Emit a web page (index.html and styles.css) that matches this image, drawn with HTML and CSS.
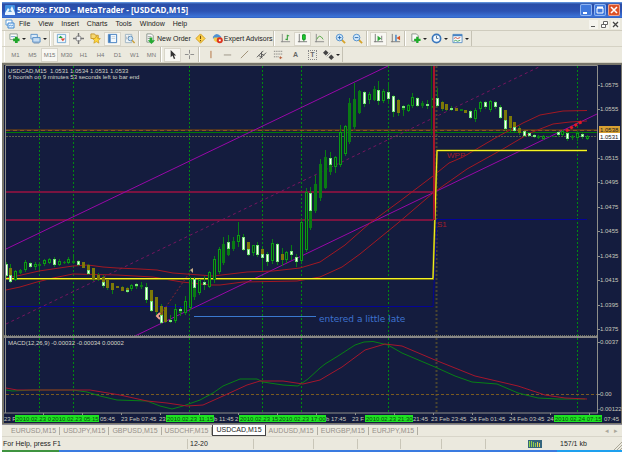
FILE: index.html
```html
<!DOCTYPE html>
<html lang="en">
<head>
<meta charset="utf-8">
<title>560799: FXDD - MetaTrader - [USDCAD,M15]</title>
<link rel="stylesheet" href="styles.css">
</head>
<body>
<div class="window">
  <header class="titlebar">
    <svg class="app-icon" viewBox="0 0 10 10"><rect width="10" height="10" rx="1" fill="#3f8fe0"/><path d="M0 8L3 3l2 2 2-4 3 7v2H0z" fill="#e8f4ff"/><path d="M3 7l2-3 2 3z" fill="#5ea0d8"/></svg>
    <h1>560799: FXDD - MetaTrader - [USDCAD,M15]</h1>
    <div class="window-buttons">
      <button aria-label="Minimize"><svg viewBox="0 0 12 12"><path d="M3 9h4" stroke="#fff" stroke-width="2"/></svg></button>
      <button aria-label="Maximize"><svg viewBox="0 0 12 12"><path d="M3 4h6v5H3z" fill="none" stroke="#fff"/><path d="M3 3.500h6" stroke="#fff" stroke-width="2"/></svg></button>
      <button class="close" aria-label="Close"><svg viewBox="0 0 12 12"><path d="M3 3l6 6M9 3L3 9" stroke="#fff" stroke-width="1.600"/></svg></button>
    </div>
  </header>

  <nav class="menubar">
    <svg class="doc-icon" viewBox="0 0 10 10"><path d="M1 1h6v5H1z" fill="#fff" stroke="#5a9ad8"/><path d="M3 4h6v5H3z" fill="#e4f2ff" stroke="#3f86d0"/><path d="M4 7l1.500-1 1 1L8 6" stroke="#5a9ad8" fill="none"/></svg>
    <button>File</button><button>View</button><button>Insert</button><button>Charts</button><button>Tools</button><button>Window</button><button>Help</button>
    <div class="child-buttons">
      <button aria-label="Minimize chart"><svg viewBox="0 0 9 9"><path d="M2 6.500h4" stroke="#555"/></svg></button>
      <button aria-label="Restore chart"><svg viewBox="0 0 9 9"><path d="M3.500 1.500h4v3h-4zM1.500 4.500h4v3h-4z" fill="#fff" stroke="#666"/></svg></button>
      <button aria-label="Close chart"><svg viewBox="0 0 9 9"><path d="M2 2l5 5M7 2L2 7" stroke="#444" stroke-width="1.300"/></svg></button>
    </div>
  </nav>

  <div class="toolbar">
    <div class="group">
      <button class="drop" aria-label="New chart"><svg viewBox="0 0 12 12"><path d="M1 1h8v6H1z" fill="#fff" stroke="#8a9a90"/><path d="M2 4h5" stroke="#6a9cc8"/><path d="M8 4v7M4.500 7.500h7" stroke="#1fa52a" stroke-width="3"/></svg></button>
      <button class="drop" aria-label="Profiles"><svg viewBox="0 0 12 12"><path d="M1 1.500h7v5H1z" fill="#dcebf8" stroke="#5b93c9"/><path d="M3 5h8v5H3z" fill="#c6ddf3" stroke="#4f89c4"/><path d="M4 11h6" stroke="#7895b5"/></svg></button>
    </div>
    <div class="group">
      <button class="on" aria-label="Market watch"><svg viewBox="0 0 12 12"><path d="M1.500 1.500h9v9h-9z" fill="#edf6fc" stroke="#73a9d2"/><path d="M2.500 5.500L5 3l2.500 2.500z" fill="#24a336"/><path d="M5 6h5L7.500 9z" fill="#e2482e"/></svg></button>
      <button aria-label="Data window"><svg viewBox="0 0 12 12"><circle cx="6" cy="6" r="3" fill="#eee" stroke="#888"/><path d="M6 0v4M6 8v4M0 6h4M8 6h4" stroke="#777" stroke-width="1.500"/></svg></button>
      <button aria-label="Navigator"><svg viewBox="0 0 12 12"><path d="M1 1h4l1 1.500h3V6H1z" fill="#f6d873" stroke="#c5962c"/><path d="M7 3l1.300 2.800 3 .3-2.300 2 .8 3L7 9.500l-2.800 1.600.7-3-2.300-2 3-.3z" fill="#ffd73c" stroke="#c99516" stroke-width=".7"/></svg></button>
      <button class="on" aria-label="Terminal"><svg viewBox="0 0 12 12"><path d="M1.500 1.500h9v9h-9z" fill="#f3f9ff" stroke="#3c79bd"/><path d="M3 2v8" stroke="#3c79bd" stroke-width="2"/><path d="M5 4h4M5 6h4" stroke="#c5ced6"/></svg></button>
      <button aria-label="Strategy tester"><svg viewBox="0 0 12 12"><path d="M1.500 1.500h7v9h-7z" fill="#eef4f8" stroke="#9eb3c1"/><path d="M3 7V4M5 8V3" stroke="#aaa"/><circle cx="7" cy="6" r="2.500" fill="#cfe5f6" stroke="#6090bc"/><path d="M9 8l2.500 3" stroke="#c79b32" stroke-width="1.500"/></svg></button>
    </div>
    <div class="group">
      <button class="text"><svg viewBox="0 0 12 12"><path d="M2 1h5l2 2v7H2z" fill="#fafafa" stroke="#89948a"/><path d="M3 4h4M3 6h3" stroke="#999"/><path d="M5 5h3v3h3L7 12 3 8h2z" fill="#24aa32"/></svg>New Order</button>
      <button aria-label="MetaEditor"><svg viewBox="0 0 12 12"><path d="M6 1l5 5-5 5-5-5z" fill="#ffd34d" stroke="#cf9b1c"/><path d="M6 3v3.500M6 7.500v1.500" stroke="#76530b" stroke-width="1.200"/></svg></button>
      <button class="text"><svg viewBox="0 0 12 12"><path d="M1 4Q5-2 10 4v2H1z" fill="#4e91d3"/><path d="M2 5h7v3Q5 12 2 8z" fill="#f3cb4c"/><circle cx="8.500" cy="8" r="3.300" fill="#dd3420"/><path d="M7.500 7h2v2h-2z" fill="#fff"/></svg>Expert Advisors</button>
    </div>
    <div class="group">
      <button aria-label="Bar chart"><svg viewBox="0 0 12 12"><path d="M2.500 1v9M1 9.500h10" stroke="#888"/><path d="M8 2v6M6 7h2M8 3h2" stroke="#38a13c" stroke-width="1.200"/></svg></button>
      <button class="on" aria-label="Candlesticks"><svg viewBox="0 0 12 12"><path d="M2.500 1v9M1 9.500h10" stroke="#777"/><path d="M7.500 1v8" stroke="#087a12"/><path d="M6 2h3v5H6z" fill="#1dcc2c" stroke="#129624"/></svg></button>
      <button aria-label="Line chart"><svg viewBox="0 0 12 12"><path d="M2.500 1v9M1 9.500h10" stroke="#888"/><path d="M3 7Q6 0 10 7" fill="none" stroke="#54a743"/></svg></button>
    </div>
    <div class="group">
      <button aria-label="Zoom in"><svg viewBox="0 0 12 12"><path d="M7 7l4 4" stroke="#d5a42b" stroke-width="2"/><circle cx="5" cy="5" r="3.600" fill="#d4eafc" stroke="#4c8ccb"/><path d="M3 5h4M5 3v4" stroke="#2467ac"/></svg></button>
      <button aria-label="Zoom out"><svg viewBox="0 0 12 12"><path d="M7 7l4 4" stroke="#d5a42b" stroke-width="2"/><circle cx="5" cy="5" r="3.600" fill="#d4eafc" stroke="#4c8ccb"/><path d="M3 5h4" stroke="#2467ac"/></svg></button>
    </div>
    <div class="group">
      <button class="on" aria-label="Auto scroll"><svg viewBox="0 0 12 12"><path d="M2.500 1v9M1 9.500h10M9.500 3v5" stroke="#777"/><path d="M5 3l4 3-4 3z" fill="#2aa637"/></svg></button>
      <button aria-label="Chart shift"><svg viewBox="0 0 12 12"><path d="M2.500 1v9M1 9.500h10" stroke="#777"/><path d="M6.500 2v7" stroke="#397fc4" stroke-width="1.500"/><path d="M11 3v5L7 5.500z" fill="#d85425"/></svg></button>
    </div>
    <div class="group">
      <button class="drop" aria-label="Indicators"><svg viewBox="0 0 12 12"><path d="M2 1h5l2 2v6H2z" fill="#fafafa" stroke="#89948a"/><path d="M8 4v7M4.500 7.500h7" stroke="#1fac2a" stroke-width="2.500"/></svg></button>
      <button class="drop" aria-label="Periods"><svg viewBox="0 0 12 12"><circle cx="6" cy="6" r="4.500" fill="#f3f9ff" stroke="#3977bd" stroke-width="1.800"/><path d="M6 3v3h2" fill="none" stroke="#56708a"/></svg></button>
      <button class="drop" aria-label="Templates"><svg viewBox="0 0 12 12"><path d="M1 1.500h10v9H1z" fill="#f6faff" stroke="#5d91c5"/><path d="M1 2.500h10" stroke="#4682c2" stroke-width="2"/><path d="M2 6l2-1 2 1 3-1" stroke="#cf513b" fill="none"/><path d="M2 9l2-1 2 1 3-1" stroke="#3da455" fill="none"/></svg></button>
    </div>
  </div>

  <div class="toolbar">
    <div class="group periods">
      <button>M1</button><button>M5</button><button class="on">M15</button><button>M30</button><button>H1</button><button>H4</button><button>D1</button><button>W1</button><button>MN</button>
    </div>
    <div class="group">
      <button class="on" aria-label="Cursor"><svg viewBox="0 0 12 12"><path d="M4 1v8l2-2 1.500 4 1.500-.7L7.500 7H10z" fill="#333"/></svg></button>
      <button aria-label="Crosshair"><svg viewBox="0 0 12 12"><path d="M6 1v4M6 7v4M1 6h4M7 6h4" stroke="#888"/></svg></button>
    </div>
    <div class="group">
      <button aria-label="Vertical line"><svg viewBox="0 0 12 12"><path d="M6.500 2v8" stroke="#b06c3a"/></svg></button>
      <button aria-label="Horizontal line"><svg viewBox="0 0 12 12"><path d="M2 6.500h8" stroke="#999083"/></svg></button>
      <button aria-label="Trendline"><svg viewBox="0 0 12 12"><path d="M2 10l8-8" stroke="#9b8b70"/></svg></button>
      <button aria-label="Channel"><svg viewBox="0 0 12 12"><path d="M1 9l7-7M4 11l7-7M3 7l4 3M5 5l4 2M6 3v6" stroke="#555"/></svg></button>
      <button aria-label="Fibonacci"><svg viewBox="0 0 12 12"><path d="M1 2.500h9M1 5.500h9M1 8.500h6" stroke="#666" stroke-dasharray="1 1"/><path d="M8 8v3M7 9.500h3" stroke="#b55a35"/></svg></button>
      <button class="letter" aria-label="Text">A</button>
      <button class="letter" aria-label="Text label"><span class="boxed">T</span></button>
      <button class="drop" aria-label="Arrows"><svg viewBox="0 0 12 12"><path d="M3 1l3 3-3 3-3-3zM9 6l3 3-3 3-3-3z" fill="#444"/><path d="M4 8l4-4" stroke="#888"/></svg></button>
    </div>
  </div>

  <main>
    <svg class="chart" id="chart" viewBox="2 63 620 361" role="img" aria-label="USDCAD M15 price chart with MACD">
      <rect class="frame" x="2" y="63" width="620" height="361"/>
      <rect class="field" x="4" y="65" width="617" height="358"/>
      <g id="session-lines"></g>
      <path class="olive-dash" d="M436.500 66V413"/>
      <path class="ask-band" d="M6 130H597"/>
      <path class="ask-dash" d="M6 130.500H597"/>
      <path class="level-green" d="M6 132.500H597"/>
      <path class="bid-dash" d="M6 136.500H597"/>
      <path class="level-red" d="M6 192H433M6 220H433"/>
      <path class="level-blue" d="M6 306.500H433L437 219.500H587"/>
      <path class="channel" d="M6 249L388 66M135 336L597 114"/>
      <path class="channel-mid" d="M6 324L541 66"/>
      <path class="average" d="M6 278L17 276 39 271 73 266 88 265 103 267 117 268 140 269 157 270 173 273 200 275 213 276 230 274 247 272 273 271 300 268 320 262 345 245 370 223 400 201 433 176 449 163 463 157 497 137 523 123 540 115 563 111 587 110.500"/>
      <path class="average" d="M6 290L20 287 37 282 53 278 73 274 117 275 153 277 170 280 182 282 210 285 220 285 243 282 297 281 320 277 342 267 360 254 398 223 433 193 467 169 503 149 530 133 553 124 570 122 587 121"/>
      <path class="pivot-base" d="M6 279H433L437 150.500H587"/>
      <path class="pivot" d="M6 278.500H433L437 150.500H587"/>
      <g id="candles"></g>
      <path class="spike-green" d="M431.500 66V135"/>
      <path class="spike" d="M434 66V220"/>
      <path class="trade-dash" d="M161 314L190 272"/>
      <path class="marker" d="M160 313l-3 3 3 3"/>
      <path class="flag" d="M190 270l3-2v5z"/>
      <path class="trend-dots" d="M566 131L574 126 583 121"/>
      <path class="note-line" d="M194 316.500H316"/>
      <text class="note" x="319" y="322">entered a little late</text>
      <text class="level-name" x="447" y="158">WPP</text>
      <text class="level-name" x="437" y="227">S1</text>
      <text class="info" x="8" y="73" xml:space="preserve">USDCAD,M15  1.0531 1.0534 1.0531 1.0533</text>
      <text class="info" x="8" y="79">6 hoorish on 9 minutes 53 seconds left to bar end</text>
      <path class="divider" d="M4 337H598"/>
      <path class="divider-dash" d="M4 335.500H598"/>
      <path class="zero" d="M6 394.500H597"/>
      <path class="macd" d="M6 390L12 391 33 390 73 390 87 392 100 396 117 400 147 401 160 406 172 409 183 406 200 400 213 393 223 386 240 379 257 379 263 382 283 385 298 386 308 379 320 368 325 364 338 356 355 345 364 342 373 341.500 388 345 402 353 435 367 455 376 472 382 497 384 518 393 538 398 558 399 585 399"/>
      <path class="signal" d="M6 388L17 390 90 390 120 395 147 401 167 403 187 406 203 405 223 396 247 385 260 381 283 381 303 384 320 380 325 377 342 367 365 350 385 344 402 346 435 360 475 376 518 386 545 395 565 398 587 399"/>
      <text class="info" x="8" y="345">MACD(12,26,9) -0.00032 -0.00034 0.00002</text>
      <path class="axis" d="M5.500 413V65.500H597.500V413"/>
      <path class="axis" d="M4 413H598"/>
      <g id="price-scale"></g>
      <g id="time-scale"></g>
    </svg>
  </main>

  <nav class="tabs">
    <a href="#chart">EURUSD,M15</a><a href="#chart">USDJPY,M15</a><a href="#chart">GBPUSD,M15</a><a href="#chart">USDCHF,M15</a><a href="#chart" class="active">USDCAD,M15</a><a href="#chart">AUDUSD,M15</a><a href="#chart">EURGBP,M15</a><a href="#chart">EURJPY,M15</a>
    <span class="tab-scroll"><button aria-label="Scroll left">◂</button><button aria-label="Scroll right">▸</button></span>
  </nav>

  <footer class="status">
    <span class="help">For Help, press F1</span>
    <span>12-20</span>
    <span></span><span></span><span></span><span></span><span></span>
    <span class="traffic"><svg viewBox="0 0 14 8"><rect width="14" height="8" fill="#34657d"/><path d="M1.500 7V1M3.500 7V1M5.500 7V2M7.500 7V3" stroke="#8fcf4c"/><path d="M9.500 7V2M11.500 7V3" stroke="#e3d052"/></svg></span>
    <span class="kb">157/1 kb</span>
    <svg class="grip" viewBox="0 0 9 9"><path d="M1 9l8-8M4 9l5-5M7 9l2-2" stroke="#aaa797"/></svg>
  </footer>
  <div class="taskbar"><i class="start"></i><i class="tasks"></i><i class="tray"></i></div>
</div>
<script src="chart.js"></script>
</body>
</html>
```
FILE: styles.css
```css
* { box-sizing: border-box; }
body {
  margin: 0;
  padding: 2px 3px 0 2px;
  background: #fff;
  font: 7px/10px "Liberation Sans", Arial, sans-serif;
  color: #222;
}
button {
  margin: 0;
  padding: 0;
  border: 0;
  background: none;
  font: inherit;
  color: inherit;
}
svg { display: block; }
.window { background: #ebe9de; }

.titlebar {
  display: flex;
  align-items: center;
  height: 16px;
  padding: 0 2px 0 3px;
  background: linear-gradient(#6ea4ea 0, #2a4da6 2px, #2c52b2 9px, #3c74d8 15px, #2c58b8 16px);
}
.app-icon { width: 10px; height: 10px; }
.titlebar h1 {
  flex: 1;
  margin: 0 0 0 2px;
  font: bold 8px/14px "Open Sans", "Noto Sans", sans-serif;
  color: #fff;
  white-space: nowrap;
}
.window-buttons { display: flex; gap: 2px; }
.window-buttons button {
  width: 12px;
  height: 12px;
  border-radius: 2px;
  background: #3f78dc;
  box-shadow: inset 0 0 0 1px #8fb4f0;
}
.window-buttons .close { background: #dd5226; box-shadow: inset 0 0 0 1px #efa790; }

.menubar {
  display: flex;
  align-items: center;
  height: 13px;
  padding: 0 2px 0 3px;
  border-bottom: 1px solid #cfccbe;
}
.doc-icon { width: 10px; height: 10px; }
.menubar > button { padding: 0 4px; }
.child-buttons { display: flex; gap: 2px; margin-left: auto; }
.child-buttons button { width: 9px; height: 9px; background: #f5f4ee; }

.toolbar {
  display: flex;
  height: 16px;
  padding-left: 2px;
  border-bottom: 1px solid #d5d2c4;
}
.group {
  display: flex;
  align-items: center;
  padding-left: 2px;
  border-left: 1px solid #fff;
  border-right: 1px solid #c5c2b4;
}
.group button {
  display: flex;
  align-items: center;
  justify-content: center;
  width: 17px;
  height: 14px;
}
.group svg { width: 11px; height: 11px; flex: none; }
.group .drop { width: 21px; }
.group .drop::after {
  content: "";
  margin-left: 2px;
  border: 2px solid transparent;
  border-top-color: #222;
  border-bottom: 0;
}
.group .text { width: auto; gap: 1px; padding: 0 1px 0 3px; white-space: nowrap; }
.group .on { background: #f8f7f2; box-shadow: inset 0 0 0 1px #d9d6ca; }
.periods { color: #777; font-size: 6px; }
.group .letter { font-weight: bold; color: #666; }
.boxed { padding: 0 1px; border: 1px dotted #888; line-height: 8px; }

.chart { width: 100%; height: auto; }
.chart path { fill: none; }
.chart .frame { fill: #77756a; }
.chart .field { fill: #141c3e; }
.chart text { font-family: "Liberation Sans", Arial, sans-serif; }
.session { stroke: #008a10; stroke-dasharray: 2 2; }
.olive-dash { stroke: #4a4530; stroke-width: 2; stroke-dasharray: 2 2; }
.ask-band { stroke: #4e3320; stroke-width: 2; }
.ask-dash { stroke: #8a5520; stroke-dasharray: 4 3; }
.level-green { stroke: #007a08; }
.bid-dash { stroke: #566046; stroke-dasharray: 2 1; }
.level-red { stroke: #7a1440; stroke-width: 2; }
.level-blue { stroke: #040496; }
.channel { stroke: #9808a8; }
.channel-mid { stroke: #761560; stroke-dasharray: 3 3; }
.average { stroke: #a31822; }
.pivot-base { stroke: #7c7a10; stroke-width: 2; }
.pivot { stroke: #f6f422; }
.spike-green { stroke: #075a12; }
.spike { stroke: #a5162c; stroke-width: 2; }
.trade-dash { stroke: #8a2530; stroke-dasharray: 2 2; }
.marker { stroke: #f3a190; stroke-width: 2; }
.chart .flag { fill: #c8ad86; }
.trend-dots { stroke: #e01c24; stroke-width: 3; stroke-dasharray: 3 2; }
.note-line { stroke: #3b79cf; }
.chart .note { font-family: "DejaVu Sans", sans-serif; font-size: 9px; fill: #3e72cf; }
.level-name { font-size: 8px; fill: #a51c2a; }
.info { font-size: 6px; fill: #d6d5ca; }
.divider { stroke: #868686; stroke-width: 2; }
.divider-dash { stroke: #707060; stroke-dasharray: 1 1; }
.zero { stroke: #7a5a20; stroke-dasharray: 3 2; }
.macd { stroke: #078015; }
.signal { stroke: #a5162c; }
.axis { stroke: #8f8f8a; }
.wick { stroke: #087f12; }
.bull { fill: #10301c; stroke: #0a9a16; }
.solid { fill: #0a7a14; }
.white { fill: #fff; stroke: #7be87a; }
.olive { fill: #7d7908; }
.tag-green { fill: #1ee322; }
.tag-ask { fill: #d8a032; }
.tag-bid { fill: #fff; }
.scale-text { font-size: 6px; fill: #c9c8bc; }
.tag-text { font-size: 6px; fill: #0b4a10; }
.tag-dark { font-size: 6px; fill: #222; }

.tabs {
  display: flex;
  align-items: center;
  height: 12px;
  padding-left: 6px;
  border-top: 1px solid #8d8c98;
}
.tabs a {
  padding: 0 3px;
  border-right: 1px solid #b0ada2;
  line-height: 8px;
  color: #96908a;
  text-decoration: none;
}
.tabs .active { border: 1px solid #444; border-top: 0; background: #fff; line-height: 10px; color: #222; }
.tab-scroll { display: flex; gap: 5px; margin-left: auto; padding-right: 4px; color: #aaa79a; }

.status {
  display: grid;
  grid-template-columns: 185fr 66fr 60fr 44fr 43fr 41fr 44fr 73fr 64fr;
  align-items: center;
  height: 14px;
  border-top: 1px solid #d8d5c9;
  position: relative;
}
.status > span { height: 10px; padding-left: 2px; border-left: 1px solid #c9c6b8; white-space: nowrap; }
.status .help { padding-left: 0; border-left-color: transparent; }
.status > span:nth-child(n+9) { border-left: 0; }
.status .traffic { display: flex; align-items: center; justify-content: flex-end; padding-right: 16px; }
.status .traffic svg { width: 14px; height: 8px; }
.grip { position: absolute; right: 0; bottom: 0; width: 9px; height: 9px; }

.taskbar { display: flex; height: 2px; }
.start { flex: 57; background: #3f9440; }
.tasks { flex: 498; background: #3a7be0; }
.tray { flex: 65; background: #1ea0ee; }
```
FILE: chart.js
```js
const NS = "http://www.w3.org/2000/svg";

function add(parent, name, attrs, text) {
  const el = document.createElementNS(NS, name);
  for (const key in attrs) el.setAttribute(key, attrs[key]);
  if (text) el.textContent = text;
  document.getElementById(parent).appendChild(el);
}

// Each candle: centre, high, body top, body bottom, low, kind
// (w white, g hollow, f solid green, o olive, m olive above white, h white above green)
const candles = [
  [6,262,264,276,278,"w"],[10,264,268,282,283,"m"],[15,270,271,280,281,"g"],[20,269,270,273,274,"f"],
  [25,260,262,270,272,"g"],[30,262,263,267,268,"w"],[35,262,264,267,270,"g"],[39,262,264,266,270,"f"],
  [44,259,260,264,266,"g"],[49,258,259,263,264,"g"],[54,257,259,265,267,"w"],[59,259,261,265,266,"g"],
  [64,261,262,263,264,"f"],[68,257,259,263,264,"g"],[73,256,261,263,264,"f"],[78,260,261,265,266,"w"],
  [83,262,262,268,268,"o"],[88,264,265,274,275,"m"],[93,268,268,280,281,"o"],[98,273,275,280,281,"o"],
  [103,275,277,286,288,"m"],[107,279,279,288,290,"o"],[112,283,283,290,294,"o"],[117,286,286,288,288,"o"],
  [122,286,287,291,291,"o"],[127,287,288,292,293,"m"],[131,284,285,289,291,"g"],[136,283,284,287,289,"h"],
  [141,282,285,287,289,"f"],[146,283,287,300,303,"w"],[151,290,290,311,312,"m"],[156,297,297,312,316,"o"],
  [161,304,306,323,324,"m"],[165,307,307,322,323,"o"],[170,315,320,322,323,"w"],[175,304,309,321,323,"g"],
  [180,307,309,313,316,"h"],[185,296,301,313,315,"g"],[190,277,279,308,310,"g"],[194,277,279,297,300,"h"],
  [199,279,280,293,295,"g"],[204,276,282,285,290,"w"],[209,271,272,287,288,"g"],[214,256,259,280,283,"g"],
  [219,247,249,272,274,"g"],[223,237,244,263,265,"f"],[228,235,242,255,256,"h"],[233,237,241,249,251,"f"],
  [238,222,235,242,247,"g"],[243,234,237,250,251,"w"],[248,242,242,255,256,"m"],[253,245,245,253,256,"g"],
  [257,242,245,255,257,"w"],[262,248,249,258,270,"m"],[267,252,254,262,266,"w"],[272,239,243,261,264,"g"],
  [277,243,244,262,265,"w"],[282,248,254,260,266,"o"],[286,251,252,260,263,"g"],[291,245,251,255,260,"w"],
  [296,254,257,262,267,"w"],[301,218,222,261,263,"g"],[306,188,192,250,252,"g"],[310,187,193,228,230,"h"],
  [315,175,184,211,213,"f"],[320,159,164,198,201,"f"],[325,150,157,188,189,"f"],[330,152,158,172,175,"h"],
  [335,156,157,167,173,"g"],[340,125,132,165,167,"g"],[345,125,126,154,156,"g"],[349,98,103,142,144,"f"],
  [354,83,99,127,129,"f"],[359,90,91,113,114,"f"],[364,91,92,104,107,"w"],[369,92,94,100,104,"g"],
  [374,86,89,100,101,"f"],[378,81,90,101,105,"w"],[383,89,91,101,103,"g"],[388,83,92,99,102,"w"],
  [393,95,96,112,117,"w"],[398,99,100,113,116,"o"],[403,105,106,110,116,"h"],[408,104,105,111,112,"g"],
  [412,93,97,106,108,"g"],[417,97,98,106,107,"w"],[422,101,103,106,108,"f"],[427,100,104,106,109,"w"],
  [432,98,99,107,108,"g"],[437,88,98,106,107,"w"],[442,101,102,109,111,"o"],[446,104,104,110,111,"o"],
  [451,106,108,110,111,"w"],[456,108,108,111,111,"o"],[461,109,109,111,111,"f"],[465,110,110,113,113,"o"],
  [470,110,111,118,119,"w"],[475,108,110,119,122,"g"],[480,101,102,109,112,"g"],[485,101,102,107,109,"w"],
  [490,100,101,110,112,"g"],[495,101,102,107,109,"w"],[500,105,107,118,119,"w"],[505,110,110,129,131,"m"],
  [510,116,116,128,132,"o"],[514,122,122,131,133,"m"],[519,126,128,133,135,"o"],[524,131,131,136,137,"w"],
  [529,133,133,136,137,"w"],[534,134,135,137,138,"h"],[538,135,136,138,139,"f"],[543,135,136,139,140,"g"],
  [548,136,136,137,137,"f"],[553,136,136,137,137,"f"],[558,131,132,135,137,"w"],[562,130,131,135,136,"g"],
  [567,132,133,139,141,"w"],[572,135,136,138,140,"f"],[577,131,133,138,141,"g"],[582,132,134,137,139,"w"],
  [587,135,136,139,140,"g"]
];

function body(kind, x, top, bottom) {
  const outlined = kind === "white" || kind === "bull";
  const inset = outlined ? 0.5 : 0;
  add("candles", "rect", {
    class: kind, x: x - 1 + inset, y: top + inset,
    width: 3 - 2 * inset, height: Math.max(1, bottom - top - 2 * inset)
  });
}

for (const [x, high, top, bottom, low, kind] of candles) {
  const middle = Math.round((top + bottom) / 2);
  add("candles", "path", { class: "wick", d: `M${x + 0.5} ${high}V${low}` });
  if (kind === "w") body("white", x, top, bottom);
  if (kind === "g") body("bull", x, top, bottom);
  if (kind === "f") body("solid", x, top, bottom);
  if (kind === "o") body("olive", x, top, bottom);
  if (kind === "m") { body("olive", x, top, middle); body("white", x, middle, bottom); }
  if (kind === "h") { body("solid", x, top, bottom); body("white", x, top, middle); }
}

for (const x of [39.5, 73.5, 189.5, 262.5, 301.5, 388.5, 577.5]) {
  add("session-lines", "path", { class: "session", d: `M${x} 66V413` });
}

const prices = [
  [85, "1.0575"], [109, "1.0555"], [158, "1.0515"], [182, "1.0495"], [207, "1.0475"], [231, "1.0455"],
  [256, "1.0435"], [280, "1.0415"], [305, "1.0395"], [329, "1.0375"], [342, "0.0037"], [394, "0.00"]
];
for (const [y, label] of prices) {
  add("price-scale", "path", { class: "axis", d: `M597 ${y + 0.5}H600` });
  add("price-scale", "text", { class: "scale-text", x: 600, y: y + 2 }, label);
}
add("price-scale", "text", { class: "scale-text", x: 598, y: 411 }, "-0.00122");
add("price-scale", "rect", { class: "tag-ask", x: 599, y: 126, width: 21, height: 7 });
add("price-scale", "text", { class: "tag-dark", x: 600, y: 132 }, "1.0538");
add("price-scale", "rect", { class: "tag-bid", x: 599, y: 133, width: 21, height: 7 });
add("price-scale", "text", { class: "tag-dark", x: 600, y: 139 }, "1.0531");

const times = [
  [4, "23 F"], [100, "05:45"], [121, "23 Feb 07:45"], [159, "23"], [214, "b 11:45"], [235, "2"],
  [326, "b 17:45"], [352, "23 F"], [413, "21:45"], [431, "23 Feb 23:45"], [470, "24 Feb 01:45"],
  [509, "24 Feb 03:45"], [547, "24"], [604, "07:45"]
];
for (const [x, label] of times) {
  add("time-scale", "text", { class: "scale-text", x, y: 421 }, label);
}
for (let x = 43.5; x < 597; x += 39) {
  add("time-scale", "path", { class: "axis", d: `M${x} 413V415` });
}
// Where two tags meet, the earlier one shows only the part of its time that fits.
const tags = [
  [15, "2010.02.23 0"], [51, "2010.02.23 05:15"], [166, "2010.02.23 11:15"], [239, "2010.02.23 15"],
  [278, "2010.02.23 17:00"], [365, "2010.02.23 21:30"], [554, "2010.02.24 07:15"]
];
for (const [x, label] of tags) {
  add("time-scale", "rect", { class: "tag-green", x, y: 415, width: 48, height: 7 });
}
for (const [x, label] of tags) {
  add("time-scale", "text", { class: "tag-text", x: x + 1, y: 421 }, label);
}
```
